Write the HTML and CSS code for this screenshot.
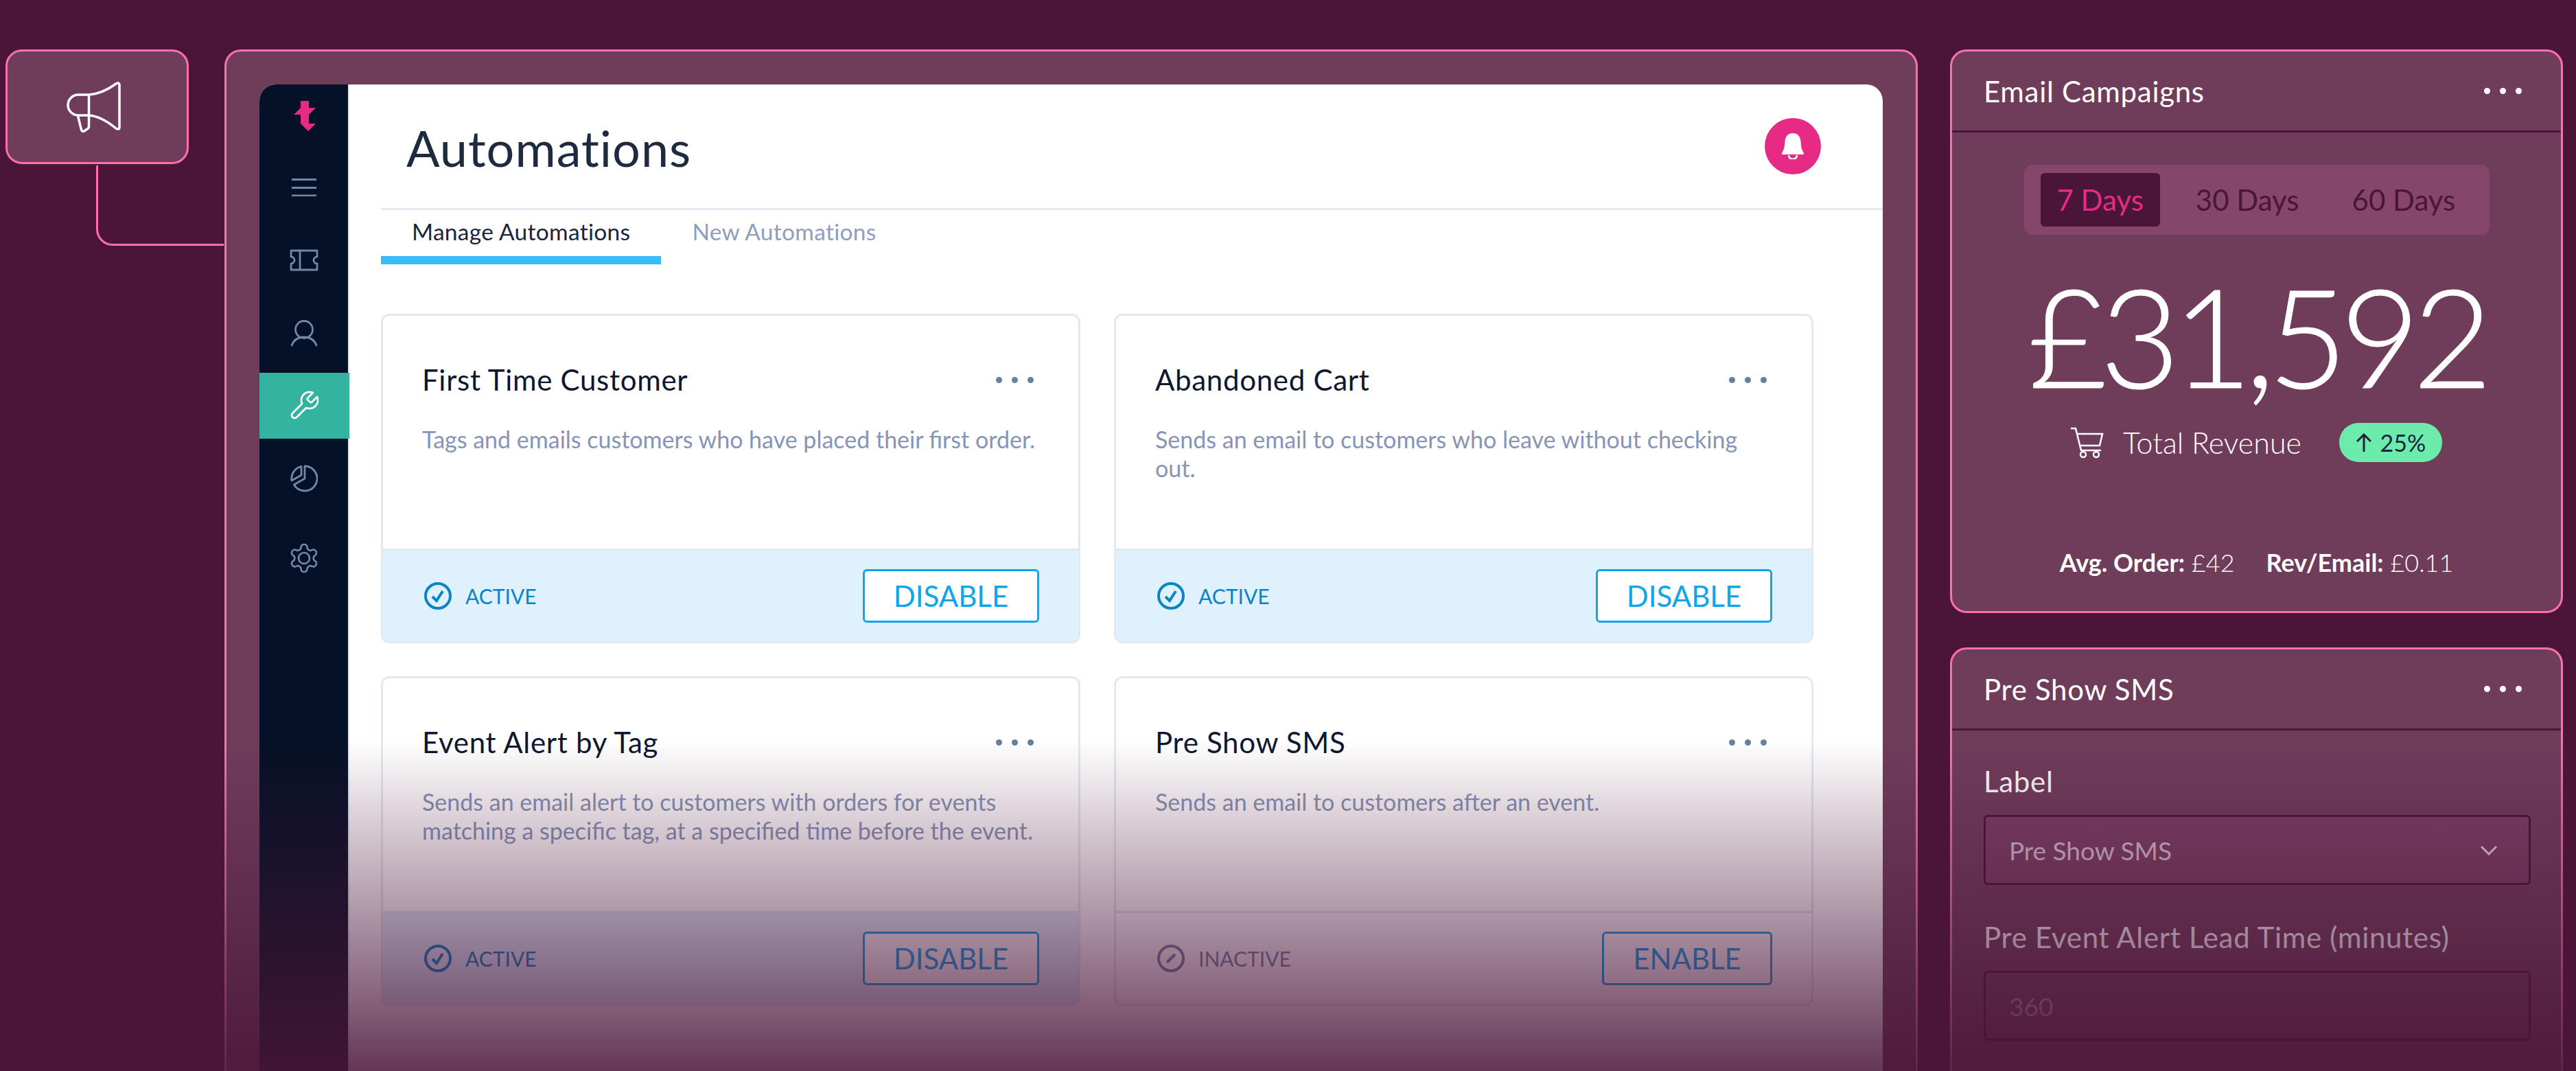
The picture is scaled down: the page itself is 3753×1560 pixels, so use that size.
FILE: index.html
```html
<!DOCTYPE html>
<html lang="en">
<head>
  <meta charset="UTF-8" />
  <title>Automations</title>
  <link rel="stylesheet" href="styles.css">
</head>
<body>
<div class="canvas">

  <div class="left-col">
    <div class="tile">
      <svg class="megaphone" viewBox="95 115 93 80" width="93" height="80">
        <path d="M129.5 137H114a15 15 0 0 0 0 30h15.500c15.500 1 28.500 10 39.500 19q5 3 5-2V123q0-5-5-2c-11 8-24 15-39.500 16z"/>
        <path d="M129.500 137v46q0 3-2.500 4l-4.500 3q-3 1-4-2l-5-20"/>
      </svg>
    </div>
    <div class="connector"></div>
  </div>

  <div class="main-panel">
    <div class="app">
      <nav class="sidebar">
        <svg class="logo" viewBox="0 0 32 44" width="32" height="44">
          <polygon points="10,0 22,0 22,10 32,10 22,20 22,33 32,33 21,44 10,33 10,20 0,20 10,10"/>
        </svg>
        <div class="nav-item">
          <svg class="nav-icon" viewBox="0 0 36 26" width="36" height="26">
            <path d="M0 1.500h36M0 13.500h36M0 25h36"/>
          </svg>
        </div>
        <div class="nav-item">
          <svg class="nav-icon" viewBox="0 0 44 32" width="44" height="32">
            <path d="M3 2h38v9a5 5 0 0 0 0 10v9H3v-9a5 5 0 0 0 0-10zM16 2v28"/>
          </svg>
        </div>
        <div class="nav-item">
          <svg class="nav-icon" viewBox="0 0 40 40" width="40" height="40">
            <circle cx="20" cy="15" r="12.500"/>
            <path d="M2 38c3-8 10-12 18-12s15 4 18 12"/>
          </svg>
        </div>
        <div class="nav-item active">
          <svg class="nav-icon" viewBox="0 0 24 24" width="48" height="48">
            <path class="thin" d="M14.700 6.300a1 1 0 0 0 0 1.400l1.600 1.600a1 1 0 0 0 1.400 0l3.770-3.770a6 6 0 0 1-7.940 7.940l-6.910 6.910a2.120 2.120 0 0 1-3-3l6.910-6.910a6 6 0 0 1 7.940-7.940l-3.760 3.760z"/>
          </svg>
        </div>
        <div class="nav-item">
          <svg class="nav-icon" viewBox="0 0 40 40" width="40" height="40">
            <path d="M21 2a18 18 0 1 1-15.600 27L21 20z"/>
            <path d="M16 2.500A18 18 0 0 0 2 23l14-8z"/>
          </svg>
        </div>
        <div class="nav-item last">
          <svg class="nav-icon" viewBox="0 0 24 24" width="48" height="48">
            <path class="thin" d="M12.220 2h-.44a2 2 0 0 0-2 2v.18a2 2 0 0 1-1 1.730l-.43.25a2 2 0 0 1-2 0l-.15-.08a2 2 0 0 0-2.730.73l-.22.38a2 2 0 0 0 .73 2.730l.15.1a2 2 0 0 1 1 1.720v.51a2 2 0 0 1-1 1.740l-.15.09a2 2 0 0 0-.73 2.730l.22.38a2 2 0 0 0 2.730.73l.15-.08a2 2 0 0 1 2 0l.43.25a2 2 0 0 1 1 1.730V20a2 2 0 0 0 2 2h.44a2 2 0 0 0 2-2v-.18a2 2 0 0 1 1-1.730l.43-.25a2 2 0 0 1 2 0l.15.08a2 2 0 0 0 2.730-.73l.22-.39a2 2 0 0 0-.73-2.730l-.15-.08a2 2 0 0 1-1-1.740v-.5a2 2 0 0 1 1-1.740l.15-.09a2 2 0 0 0 .73-2.730l-.22-.38a2 2 0 0 0-2.730-.73l-.15.08a2 2 0 0 1-2 0l-.43-.25a2 2 0 0 1-1-1.730V4a2 2 0 0 0-2-2z"/>
            <circle class="thin" cx="12" cy="12" r="4"/>
          </svg>
        </div>
      </nav>

      <div class="content">
        <header class="page-head">
          <h1>Automations</h1>
          <div class="bell">
            <svg viewBox="0 0 34 38" width="34" height="38">
              <path class="bell-body" d="M17 0C9 0 6 6 5.500 12 5 20 4 24 2 27q-2 4 0 4h30q2 0 0-4c-2-3-3-7-3.500-15C28 6 25 0 17 0z"/>
              <path class="bell-clap" d="M11 32a6 6 0 0 0 12 0"/>
            </svg>
          </div>
        </header>

        <div class="tabs">
          <div class="tab current">Manage Automations</div>
          <div class="tab">New Automations</div>
        </div>

        <div class="cards">
          <div class="card">
            <div class="card-body">
              <div class="card-top">
                <h2>First Time Customer</h2>
                <div class="dots"><i></i><i></i><i></i></div>
              </div>
              <p>Tags and emails customers who have placed their first order.</p>
            </div>
            <div class="card-foot on">
              <div class="status">
                <svg class="status-icon" viewBox="0 0 40 40" width="40" height="40"><circle cx="20" cy="20" r="18"/><path d="M12 21l6 6 9-14"/></svg>
                ACTIVE
              </div>
              <div class="btn">DISABLE</div>
            </div>
          </div>

          <div class="card">
            <div class="card-body">
              <div class="card-top">
                <h2>Abandoned Cart</h2>
                <div class="dots"><i></i><i></i><i></i></div>
              </div>
              <p>Sends an email to customers who leave without checking<br>out.</p>
            </div>
            <div class="card-foot on">
              <div class="status">
                <svg class="status-icon" viewBox="0 0 40 40" width="40" height="40"><circle cx="20" cy="20" r="18"/><path d="M12 21l6 6 9-14"/></svg>
                ACTIVE
              </div>
              <div class="btn">DISABLE</div>
            </div>
          </div>

          <div class="card">
            <div class="card-body">
              <div class="card-top">
                <h2>Event Alert by Tag</h2>
                <div class="dots"><i></i><i></i><i></i></div>
              </div>
              <p>Sends an email alert to customers with orders for events<br>matching a specific tag, at a specified time before the event.</p>
            </div>
            <div class="card-foot on">
              <div class="status">
                <svg class="status-icon" viewBox="0 0 40 40" width="40" height="40"><circle cx="20" cy="20" r="18"/><path d="M12 21l6 6 9-14"/></svg>
                ACTIVE
              </div>
              <div class="btn">DISABLE</div>
            </div>
          </div>

          <div class="card">
            <div class="card-body">
              <div class="card-top">
                <h2>Pre Show SMS</h2>
                <div class="dots"><i></i><i></i><i></i></div>
              </div>
              <p>Sends an email to customers after an event.</p>
            </div>
            <div class="card-foot">
              <div class="status off">
                <svg class="status-icon" viewBox="0 0 40 40" width="40" height="40"><circle cx="20" cy="20" r="18"/><path d="M14 26l12-12"/></svg>
                INACTIVE
              </div>
              <div class="btn plain">ENABLE</div>
            </div>
          </div>
        </div>
      </div>
    </div>
  </div>

  <div class="right-col">
    <section class="widget">
      <div class="widget-head">
        <h3>Email Campaigns</h3>
        <div class="dots light"><i></i><i></i><i></i></div>
      </div>
      <div class="revenue">
        <div class="range">
          <span class="range-item selected">7 Days</span>
          <span class="range-item">30 Days</span>
          <span class="range-item">60 Days</span>
        </div>
        <div class="amount">£31,592</div>
        <div class="total">
          <svg class="cart" viewBox="0 0 48 46" width="48" height="46">
            <path d="M0 2h7l8 32h29M9 10h37l-4 17H13"/>
            <circle cx="18" cy="40" r="4"/>
            <circle cx="37" cy="40" r="4"/>
          </svg>
          <span class="total-label">Total Revenue</span>
          <span class="badge">
            <svg viewBox="0 0 24 28" width="24" height="28"><path d="M12 27V2M2 12L12 2l10 10"/></svg>
            25%
          </span>
        </div>
        <div class="stats">
          <span><b>Avg. Order:</b> £42</span>
          <span><b>Rev/Email:</b> £0.11</span>
        </div>
      </div>
    </section>

    <section class="widget grow">
      <div class="widget-head">
        <h3>Pre Show SMS</h3>
        <div class="dots light"><i></i><i></i><i></i></div>
      </div>
      <div class="form">
        <div class="field-label">Label</div>
        <div class="field select">
          <span>Pre Show SMS</span>
          <svg viewBox="0 0 26 15" width="26" height="15"><path d="M2 2l11 11L24 2"/></svg>
        </div>
        <div class="field-label second">Pre Event Alert Lead Time (minutes)</div>
        <div class="field input"><span>360</span></div>
      </div>
    </section>
  </div>

  <div class="fade"></div>
</div>
</body>
</html>
```

FILE: styles.css
```css
* {
  box-sizing: border-box;
}
html, body {
  margin: 0;
  background: #4a1538;
}
body {
  font-family: "Lato", "Liberation Sans", sans-serif;
}
h1, h2, h3, p {
  margin: 0;
  font-weight: 400;
}
.canvas {
  position: relative;
  display: flex;
  width: 3753px;
  height: 1560px;
  padding-top: 72px;
  overflow: hidden;
}

/* left tile + connector */
.left-col {
  width: 327px;
  flex: none;
  padding-left: 8px;
}
.tile {
  display: flex;
  align-items: center;
  justify-content: center;
  width: 267px;
  height: 167px;
  background: #6f3d5a;
  border: 3px solid #ff6fae;
  border-radius: 24px;
}
.megaphone {
  fill: none;
  stroke: #fff;
  stroke-width: 3.500;
  stroke-linejoin: round;
}
.connector {
  width: 186px;
  height: 117px;
  margin: 2px 0 0 132px;
  border-left: 3px solid #ff6fae;
  border-bottom: 3px solid #ff6fae;
  border-bottom-left-radius: 24px;
}

/* main panel */
.main-panel {
  width: 2467px;
  flex: none;
  padding: 48px 48px 0;
  background: #6f3d5a;
  border: 3px solid #ff6fae;
  border-bottom: 0;
  border-radius: 24px 24px 0 0;
}
.app {
  display: flex;
  height: 100%;
  background: #fff;
  border-radius: 24px 24px 0 0;
  overflow: hidden;
}
.sidebar {
  width: 131px;
  flex: none;
  padding-top: 24px;
  background: #051126;
  border-right: 2px solid #dfe6f0;
}
.logo {
  display: block;
  margin: 0 0 34px 50px;
  fill: #e72b84;
}
.nav-item {
  display: flex;
  align-items: center;
  justify-content: center;
  width: 131px;
  height: 96px;
  margin-bottom: 10px;
}
.nav-item.active {
  background: #34b3a0;
}
.nav-item.last {
  margin-top: 20px;
}
.nav-icon {
  margin-right: 2px;
  fill: none;
  stroke: #7486a6;
  stroke-width: 2.800;
  stroke-linecap: round;
  stroke-linejoin: round;
}
.nav-icon .thin {
  stroke-width: 1.350;
}
.nav-item.active .nav-icon {
  stroke: #fff;
}

.content {
  flex: 1;
  padding-left: 46px;
}
.page-head {
  display: flex;
  align-items: center;
  justify-content: space-between;
  height: 180px;
  padding: 4px 90px 0 37px;
}
h1 {
  font-size: 72px;
  letter-spacing: 1px;
  color: #1d2a40;
}
.bell {
  display: flex;
  align-items: center;
  justify-content: center;
  width: 82px;
  height: 82px;
  margin-top: -4px;
  background: #e72b84;
  border-radius: 50%;
}
.bell-body {
  fill: #fff;
}
.bell-clap {
  fill: none;
  stroke: #fff;
  stroke-width: 2.500;
}
.tabs {
  display: flex;
  height: 82px;
  border-top: 3px solid #e3e9f2;
}
.tab {
  height: 79px;
  padding: 11px 45px 0;
  font-size: 33.500px;
  letter-spacing: .3px;
  color: #8f9dbf;
}
.tab.current {
  color: #1b2540;
  border-bottom: 12px solid #38bdf8;
}
.cards {
  display: grid;
  grid-template-columns: 1019px 1019px;
  grid-auto-rows: 480px;
  gap: 48px 49px;
  margin-top: 72px;
}
.card {
  display: flex;
  flex-direction: column;
  background: #fff;
  border: 3px solid #e3e9f2;
  border-radius: 12px;
  overflow: hidden;
}
.card-body {
  flex: 1;
  padding: 69px 65px 0 57px;
}
.card-top {
  display: flex;
  align-items: center;
  justify-content: space-between;
  margin-bottom: 42px;
}
h2 {
  font-size: 42px;
  line-height: 48px;
  letter-spacing: .7px;
  color: #0d1730;
}
.card-body p {
  font-size: 34px;
  line-height: 42px;
  white-space: nowrap;
  color: #8794b8;
}
.dots {
  display: flex;
  gap: 14px;
}
.dots i {
  width: 9px;
  height: 9px;
  background: #6b7f9c;
  border-radius: 50%;
}
.dots.light i {
  background: #fff;
}
.card-foot {
  display: flex;
  align-items: center;
  justify-content: space-between;
  flex: none;
  height: 135px;
  padding: 0 57px 0 60px;
  border-top: 3px solid #e3e9f2;
}
.card-foot.on {
  background: #dff1fd;
}
.status {
  display: flex;
  align-items: center;
  gap: 20px;
  font-size: 30px;
  color: #0a84c6;
}
.status.off {
  color: #7b82a8;
}
.status-icon {
  fill: none;
  stroke: currentColor;
  stroke-width: 4;
}
.btn {
  display: flex;
  align-items: center;
  justify-content: center;
  width: 257px;
  height: 78px;
  font-size: 42px;
  color: #0ea5e9;
  background: #fff;
  border: 3px solid #0ea5e9;
  border-radius: 6px;
}
.btn.plain {
  width: 248px;
}

/* right column */
.right-col {
  display: flex;
  flex-direction: column;
  gap: 50px;
  width: 893px;
  flex: none;
  margin-left: 47px;
}
.widget {
  height: 821px;
  flex: none;
  color: #fff;
  background: #6f3d5a;
  border: 3px solid #ff6fae;
  border-radius: 24px;
}
.widget.grow {
  flex: 1;
  height: auto;
  border-bottom: 0;
  border-radius: 24px 24px 0 0;
}
.widget-head {
  display: flex;
  align-items: center;
  justify-content: space-between;
  height: 118px;
  padding: 0 57px 0 46px;
  border-bottom: 3px solid #4a1538;
}
h3 {
  font-size: 42px;
  letter-spacing: .7px;
}
.revenue {
  display: flex;
  flex-direction: column;
  align-items: center;
  padding-top: 47px;
}
.range {
  display: flex;
  align-items: center;
  width: 678px;
  height: 102px;
  padding: 0 24px;
  background: #86466a;
  border-radius: 12px;
}
.range-item {
  flex: none;
  padding: 0 24px;
  line-height: 78px;
  font-size: 42px;
  white-space: nowrap;
  color: #4a1538;
}
.range-item.selected {
  margin-right: 28px;
  color: #e72b84;
  background: #4a1538;
  border-radius: 6px;
}
.range-item + .range-item {
  margin-right: 29px;
}
.amount {
  margin-top: 26px;
  font-size: 200px;
  line-height: 240px;
  font-weight: 300;
  letter-spacing: -10.500px;
  -webkit-text-stroke: 1px #fff;
}
.total {
  display: flex;
  align-items: center;
  margin-top: 8px;
  height: 57px;
}
.cart {
  fill: none;
  stroke: #fff;
  stroke-width: 2.500;
}
.total-label {
  margin: 0 55px 0 28px;
  font-size: 43px;
  font-weight: 300;
}
.badge {
  display: flex;
  align-items: center;
  justify-content: center;
  gap: 12px;
  width: 150px;
  height: 57px;
  font-size: 34px;
  color: #1c2340;
  background: #6cecab;
  border-radius: 28px;
}
.badge svg {
  fill: none;
  stroke: #1c2340;
  stroke-width: 3;
}
.stats {
  display: flex;
  gap: 46px;
  margin-top: 124px;
  font-size: 36px;
  font-weight: 300;
}
.stats b {
  font-weight: 700;
}
.form {
  padding: 50px 46px;
}
.field-label {
  font-size: 42px;
  line-height: 48px;
  letter-spacing: .7px;
  white-space: nowrap;
}
.field-label.second {
  margin-top: 52px;
}
.field {
  display: flex;
  align-items: center;
  justify-content: space-between;
  width: 797px;
  height: 102px;
  margin-top: 25px;
  padding: 0 45px 0 34px;
  font-size: 37px;
  border: 3px solid #4a1538;
  border-radius: 6px;
}
.select {
  color: #d8c4d2;
  background: #7a3f64;
}
.select svg {
  fill: none;
  stroke: #e6d8e2;
  stroke-width: 3;
}
.input {
  color: #a98ba0;
}

/* fade at the bottom of the picture */
.fade {
  position: absolute;
  left: 0;
  right: 0;
  top: 1078px;
  bottom: 0;
  background: linear-gradient(to bottom, rgba(74, 21, 56, 0), rgba(74, 21, 56, .855));
}
```
